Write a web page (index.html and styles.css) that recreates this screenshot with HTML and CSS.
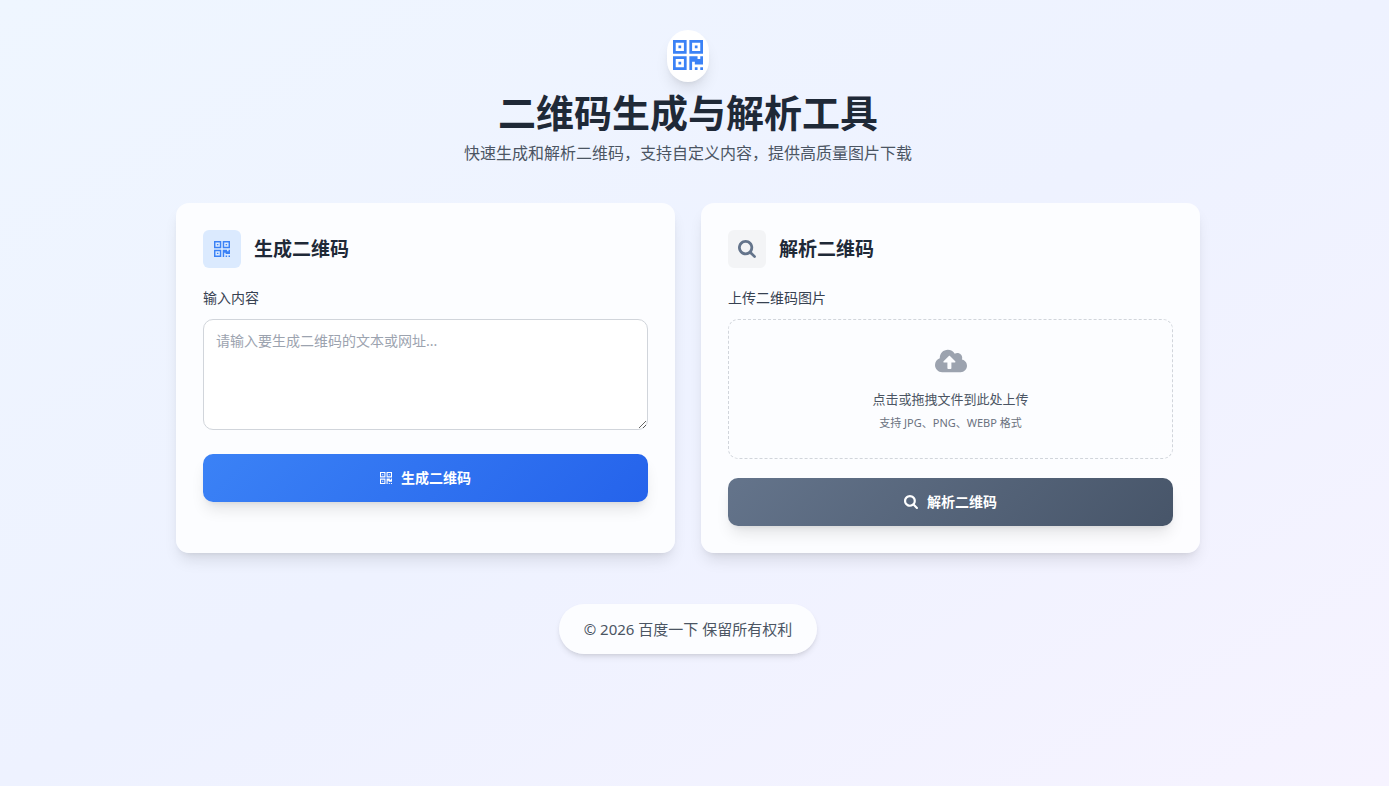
FILE: index.html
```html
<!DOCTYPE html>
<html lang="zh-CN">
<head>
<meta charset="utf-8">
<meta name="viewport" content="width=device-width, initial-scale=1">
<title>二维码生成与解析工具</title>
<link rel="stylesheet" href="styles.css">
</head>
<body>
<svg class="sprite" aria-hidden="true">
  <symbol id="qrcode" viewBox="0 128 1408 1408"><path d="M384 1152v128h-128v-128h128zm0-768v128h-128v-128h128zm768 0v128h-128v-128h128zm-1024 1023h384v-383h-384v383zm0-767h384v-384h-384v384zm768 0h384v-384h-384v384zm-256 256v640h-640v-640h640zm512 512v128h-128v-128h128zm256 0v128h-128v-128h128zm0-512v384h-384v-128h-128v384h-128v-640h384v128h128v-128h128zm-768-768v640h-640v-640h640zm768 0v640h-640v-640h640z"/></symbol>
  <symbol id="search" viewBox="0 128 1664 1664"><path d="M1152 832q0-185-131.500-316.500t-316.500-131.500-316.500 131.500-131.500 316.500 131.500 316.500 316.500 131.500 316.500-131.500 131.500-316.500zm512 832q0 52-38 90t-90 38q-54 0-90-38l-343-342q-179 124-399 124-143 0-273.500-55.500t-225-150-150-225-55.500-273.500 55.500-273.500 150-225 225-150 273.500-55.500 273.500 55.500 225 150 150 225 55.500 273.500q0 220-124 399l343 343q37 37 37 90z"/></symbol>
  <symbol id="upload" viewBox="0 32 640 448"><path d="M537.6 226.600c4.100-10.700 6.400-22.400 6.400-34.600 0-53-43-96-96-96-19.700 0-38.100 6-53.300 16.200C367 64.200 315.300 32 256 32c-88.400 0-160 71.600-160 160 0 2.700.1 5.400.2 8.100C40.200 219.800 0 273.200 0 336c0 79.500 64.500 144 144 144h368c70.700 0 128-57.300 128-128 0-61.900-44-113.600-102.400-125.400zM393.400 288H328v112c0 8.800-7.200 16-16 16h-48c-8.800 0-16-7.200-16-16V288h-65.400c-14.300 0-21.400-17.200-11.300-27.300l105.400-105.400c6.200-6.200 16.400-6.200 22.600 0l105.400 105.400c10.100 10.100 2.900 27.300-11.300 27.300z"/></symbol>
</svg>
<div class="page">
  <header class="header">
    <div class="logo"><svg class="icon icon-logo" aria-hidden="true"><use href="#qrcode"/></svg></div>
    <h1 class="title">二维码生成与解析工具</h1>
    <p class="subtitle">快速生成和解析二维码，支持自定义内容，提供高质量图片下载</p>
  </header>
  <main class="cards">
    <section class="card">
      <div class="card-head">
        <span class="badge badge-blue"><svg class="icon icon-badge" aria-hidden="true"><use href="#qrcode"/></svg></span>
        <h2 class="card-title">生成二维码</h2>
      </div>
      <label class="label" for="content">输入内容</label>
      <textarea class="textarea" id="content" placeholder="请输入要生成二维码的文本或网址..."></textarea>
      <button class="button button-blue" type="button"><svg class="icon icon-button" aria-hidden="true"><use href="#qrcode"/></svg>生成二维码</button>
    </section>
    <section class="card">
      <div class="card-head">
        <span class="badge badge-gray"><svg class="icon icon-search" aria-hidden="true"><use href="#search"/></svg></span>
        <h2 class="card-title">解析二维码</h2>
      </div>
      <label class="label" for="file">上传二维码图片</label>
      <input class="file-input" type="file" id="file" accept="image/jpeg,image/png,image/webp">
      <label class="dropzone" for="file">
        <svg class="icon icon-upload" aria-hidden="true"><use href="#upload"/></svg>
        <span class="drop-text">点击或拖拽文件到此处上传</span>
        <span class="drop-hint">支持 JPG、PNG、WEBP 格式</span>
      </label>
      <button class="button button-slate" type="button"><svg class="icon icon-button-search" aria-hidden="true"><use href="#search"/></svg>解析二维码</button>
    </section>
  </main>
  <footer class="footer"><p class="copyright">© 2026 百度一下 保留所有权利</p></footer>
</div>
</body>
</html>
```
FILE: styles.css
```css
* {
  box-sizing: border-box;
}

body {
  margin: 0;
  min-height: 100vh;
  padding: 30px 13px 24px 0;
  background: linear-gradient(to bottom right, #eff6ff, #eef2ff 50%, #f6f3ff);
  color: #1f2937;
  font-family: "Noto Sans", "Noto Sans CJK SC", sans-serif;
}

h1, h2, p {
  margin: 0;
}

.sprite {
  display: none;
}

.icon {
  display: block;
  flex: none;
  fill: currentColor;
}

.page {
  max-width: 1024px;
  margin: 0 auto;
}

.header {
  display: flex;
  flex-direction: column;
  align-items: center;
  text-align: center;
}

.logo {
  padding: 10px 5px 12px;
  border-radius: 21px;
  background: #fff;
  color: #3b82f6;
  box-shadow: 0 10px 15px -3px rgba(0, 0, 0, 0.1), 0 4px 6px -4px rgba(0, 0, 0, 0.1);
}

.icon-logo {
  width: 32px;
  height: 30px;
}

.title {
  margin-top: 8px;
  font-size: 38px;
  line-height: 44px;
  font-weight: 700;
}

.subtitle {
  margin-top: 6px;
  font-size: 16px;
  line-height: 26px;
  color: #4b5563;
}

.cards {
  display: grid;
  grid-template-columns: 1fr 1fr;
  gap: 26px;
  margin-top: 37px;
}

.card {
  display: flex;
  flex-direction: column;
  padding: 27px;
  border-radius: 13px;
  background: rgba(255, 255, 255, 0.8);
  box-shadow: 0 10px 15px -3px rgba(0, 0, 0, 0.1), 0 4px 6px -4px rgba(0, 0, 0, 0.1);
}

.card-head {
  display: flex;
  align-items: center;
  gap: 13px;
}

.badge {
  display: flex;
  align-items: center;
  justify-content: center;
  width: 38px;
  height: 38px;
  border-radius: 6px;
}

.badge-blue {
  background: #dbeafe;
  color: #3b82f6;
}

.badge-gray {
  background: #f3f4f6;
  color: #64748b;
}

.icon-badge {
  width: 16px;
  height: 16px;
}

.icon-search {
  width: 18px;
  height: 18px;
}

.card-title {
  font-size: 19px;
  line-height: 26px;
  font-weight: 700;
}

.label {
  margin: 20px 0 11px;
  font-size: 14px;
  line-height: 20px;
  color: #374151;
}

.textarea {
  width: 100%;
  height: 111px;
  margin-bottom: 24px;
  padding: 11px 12px;
  border: 1px solid #d1d5db;
  border-radius: 10px;
  background: #fff;
  color: #1f2937;
  font: inherit;
  font-size: 14px;
  line-height: 20px;
  resize: vertical;
}

.textarea::placeholder {
  color: #9ca3af;
}

.button {
  display: flex;
  align-items: center;
  justify-content: center;
  gap: 9px;
  height: 48px;
  border: 0;
  border-radius: 10px;
  color: #fff;
  font: inherit;
  font-size: 14px;
  line-height: 20px;
  font-weight: 700;
  cursor: pointer;
  box-shadow: 0 10px 15px -3px rgba(0, 0, 0, 0.1), 0 4px 6px -4px rgba(0, 0, 0, 0.1);
}

.button-blue {
  background: linear-gradient(135deg, #3b82f6, #2563eb);
}

.button-slate {
  background: linear-gradient(135deg, #64748b, #475569);
}

.icon-button {
  width: 12px;
  height: 12px;
}

.icon-button-search {
  width: 14px;
  height: 14px;
}

.file-input {
  position: absolute;
  width: 1px;
  height: 1px;
  opacity: 0;
}

.dropzone {
  display: flex;
  flex-direction: column;
  align-items: center;
  height: 140px;
  margin-bottom: 19px;
  padding-top: 29px;
  border: 1px dashed #d1d5db;
  border-radius: 10px;
  cursor: pointer;
}

.icon-upload {
  width: 32px;
  height: 24px;
  color: #9ca3af;
}

.drop-text {
  margin-top: 16px;
  font-size: 13px;
  line-height: 20px;
  color: #4b5563;
}

.drop-hint {
  margin-top: 6px;
  font-size: 11px;
  line-height: 16px;
  color: #6b7280;
}

.footer {
  display: flex;
  justify-content: center;
  margin-top: 51px;
}

.copyright {
  padding: 15px 25px;
  border-radius: 25px;
  background: rgba(255, 255, 255, 0.8);
  box-shadow: 0 4px 6px -1px rgba(0, 0, 0, 0.1), 0 2px 4px -2px rgba(0, 0, 0, 0.1);
  font-size: 15px;
  line-height: 20px;
  color: #4b5563;
}

@media (max-width: 760px) {
  .cards {
    grid-template-columns: 1fr;
  }
}
```
